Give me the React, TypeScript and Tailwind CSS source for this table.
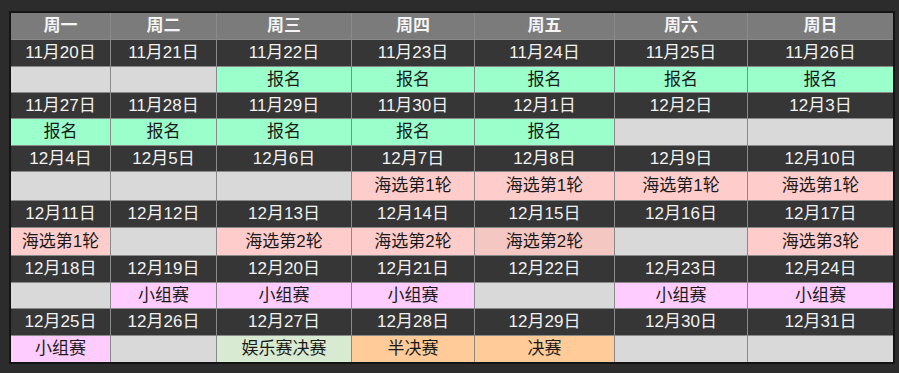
const FONT = { fontFamily: '"Liberation Sans", "Noto Sans CJK SC", sans-serif' };

const days = ["周一", "周二", "周三", "周四", "周五", "周六", "周日"];

type Cell = { text?: string; bg: string };

const E: Cell = { bg: "bg-[#d9d9d9]" };
const SIGN: Cell = { text: "报名", bg: "bg-[#9affcb]" };
const R1: Cell = { text: "海选第1轮", bg: "bg-[#ffcccc]" };
const R2: Cell = { text: "海选第2轮", bg: "bg-[#ffcccc]" };
const GROUP: Cell = { text: "小组赛", bg: "bg-[#ffccff]" };

const weeks: { dates: string[]; events: Cell[] }[] = [
  {
    dates: ["11月20日", "11月21日", "11月22日", "11月23日", "11月24日", "11月25日", "11月26日"],
    events: [E, E, SIGN, SIGN, SIGN, SIGN, SIGN],
  },
  {
    dates: ["11月27日", "11月28日", "11月29日", "11月30日", "12月1日", "12月2日", "12月3日"],
    events: [SIGN, SIGN, SIGN, SIGN, SIGN, E, E],
  },
  {
    dates: ["12月4日", "12月5日", "12月6日", "12月7日", "12月8日", "12月9日", "12月10日"],
    events: [E, E, E, R1, R1, R1, R1],
  },
  {
    dates: ["12月11日", "12月12日", "12月13日", "12月14日", "12月15日", "12月16日", "12月17日"],
    events: [R1, E, R2, R2, { text: "海选第2轮", bg: "bg-[#f4c7c3]" }, E, { text: "海选第3轮", bg: "bg-[#ffcccc]" }],
  },
  {
    dates: ["12月18日", "12月19日", "12月20日", "12月21日", "12月22日", "12月23日", "12月24日"],
    events: [E, GROUP, GROUP, GROUP, E, GROUP, GROUP],
  },
  {
    dates: ["12月25日", "12月26日", "12月27日", "12月28日", "12月29日", "12月30日", "12月31日"],
    events: [
      GROUP,
      E,
      { text: "娱乐赛决赛", bg: "bg-[#d9ead3]" },
      { text: "半决赛", bg: "bg-[#ffcc99]" },
      { text: "决赛", bg: "bg-[#ffcc99]" },
      E,
      E,
    ],
  },
];

export default function App() {
  return (
    <div className="w-full h-[373px] bg-[#2c2c2c] pt-[11px] pl-[9px]" style={FONT}>
      <div className="w-fit border-2 border-[#141414]">
        <div className="grid grid-cols-[99px_105px_134px_122px_139px_132px_145px] grid-rows-[26px_26px_25px_25px_26px_25px_28px_26px_27px_26px_25px_26px_26px] gap-px bg-[#8a8a8a]">
          {days.map((d) => (
            <div
              key={d}
              className="bg-[#7b7b7b] text-[#f4f4f4] font-bold text-[17px] flex items-center justify-center"
            >
              {d}
            </div>
          ))}
          {weeks.map((w, i) => (
            <>
              {w.dates.map((date) => (
                <div
                  key={date}
                  className="bg-[#363636] text-[#f2f2f2] text-[17px] flex items-center justify-center"
                >
                  {date}
                </div>
              ))}
              {w.events.map((ev, j) => (
                <div
                  key={`ev-${i}-${j}`}
                  className={`${ev.bg} text-[#1a1a1a] text-[17px] flex items-center justify-center`}
                >
                  {ev.text}
                </div>
              ))}
            </>
          ))}
        </div>
      </div>
    </div>
  );
}
